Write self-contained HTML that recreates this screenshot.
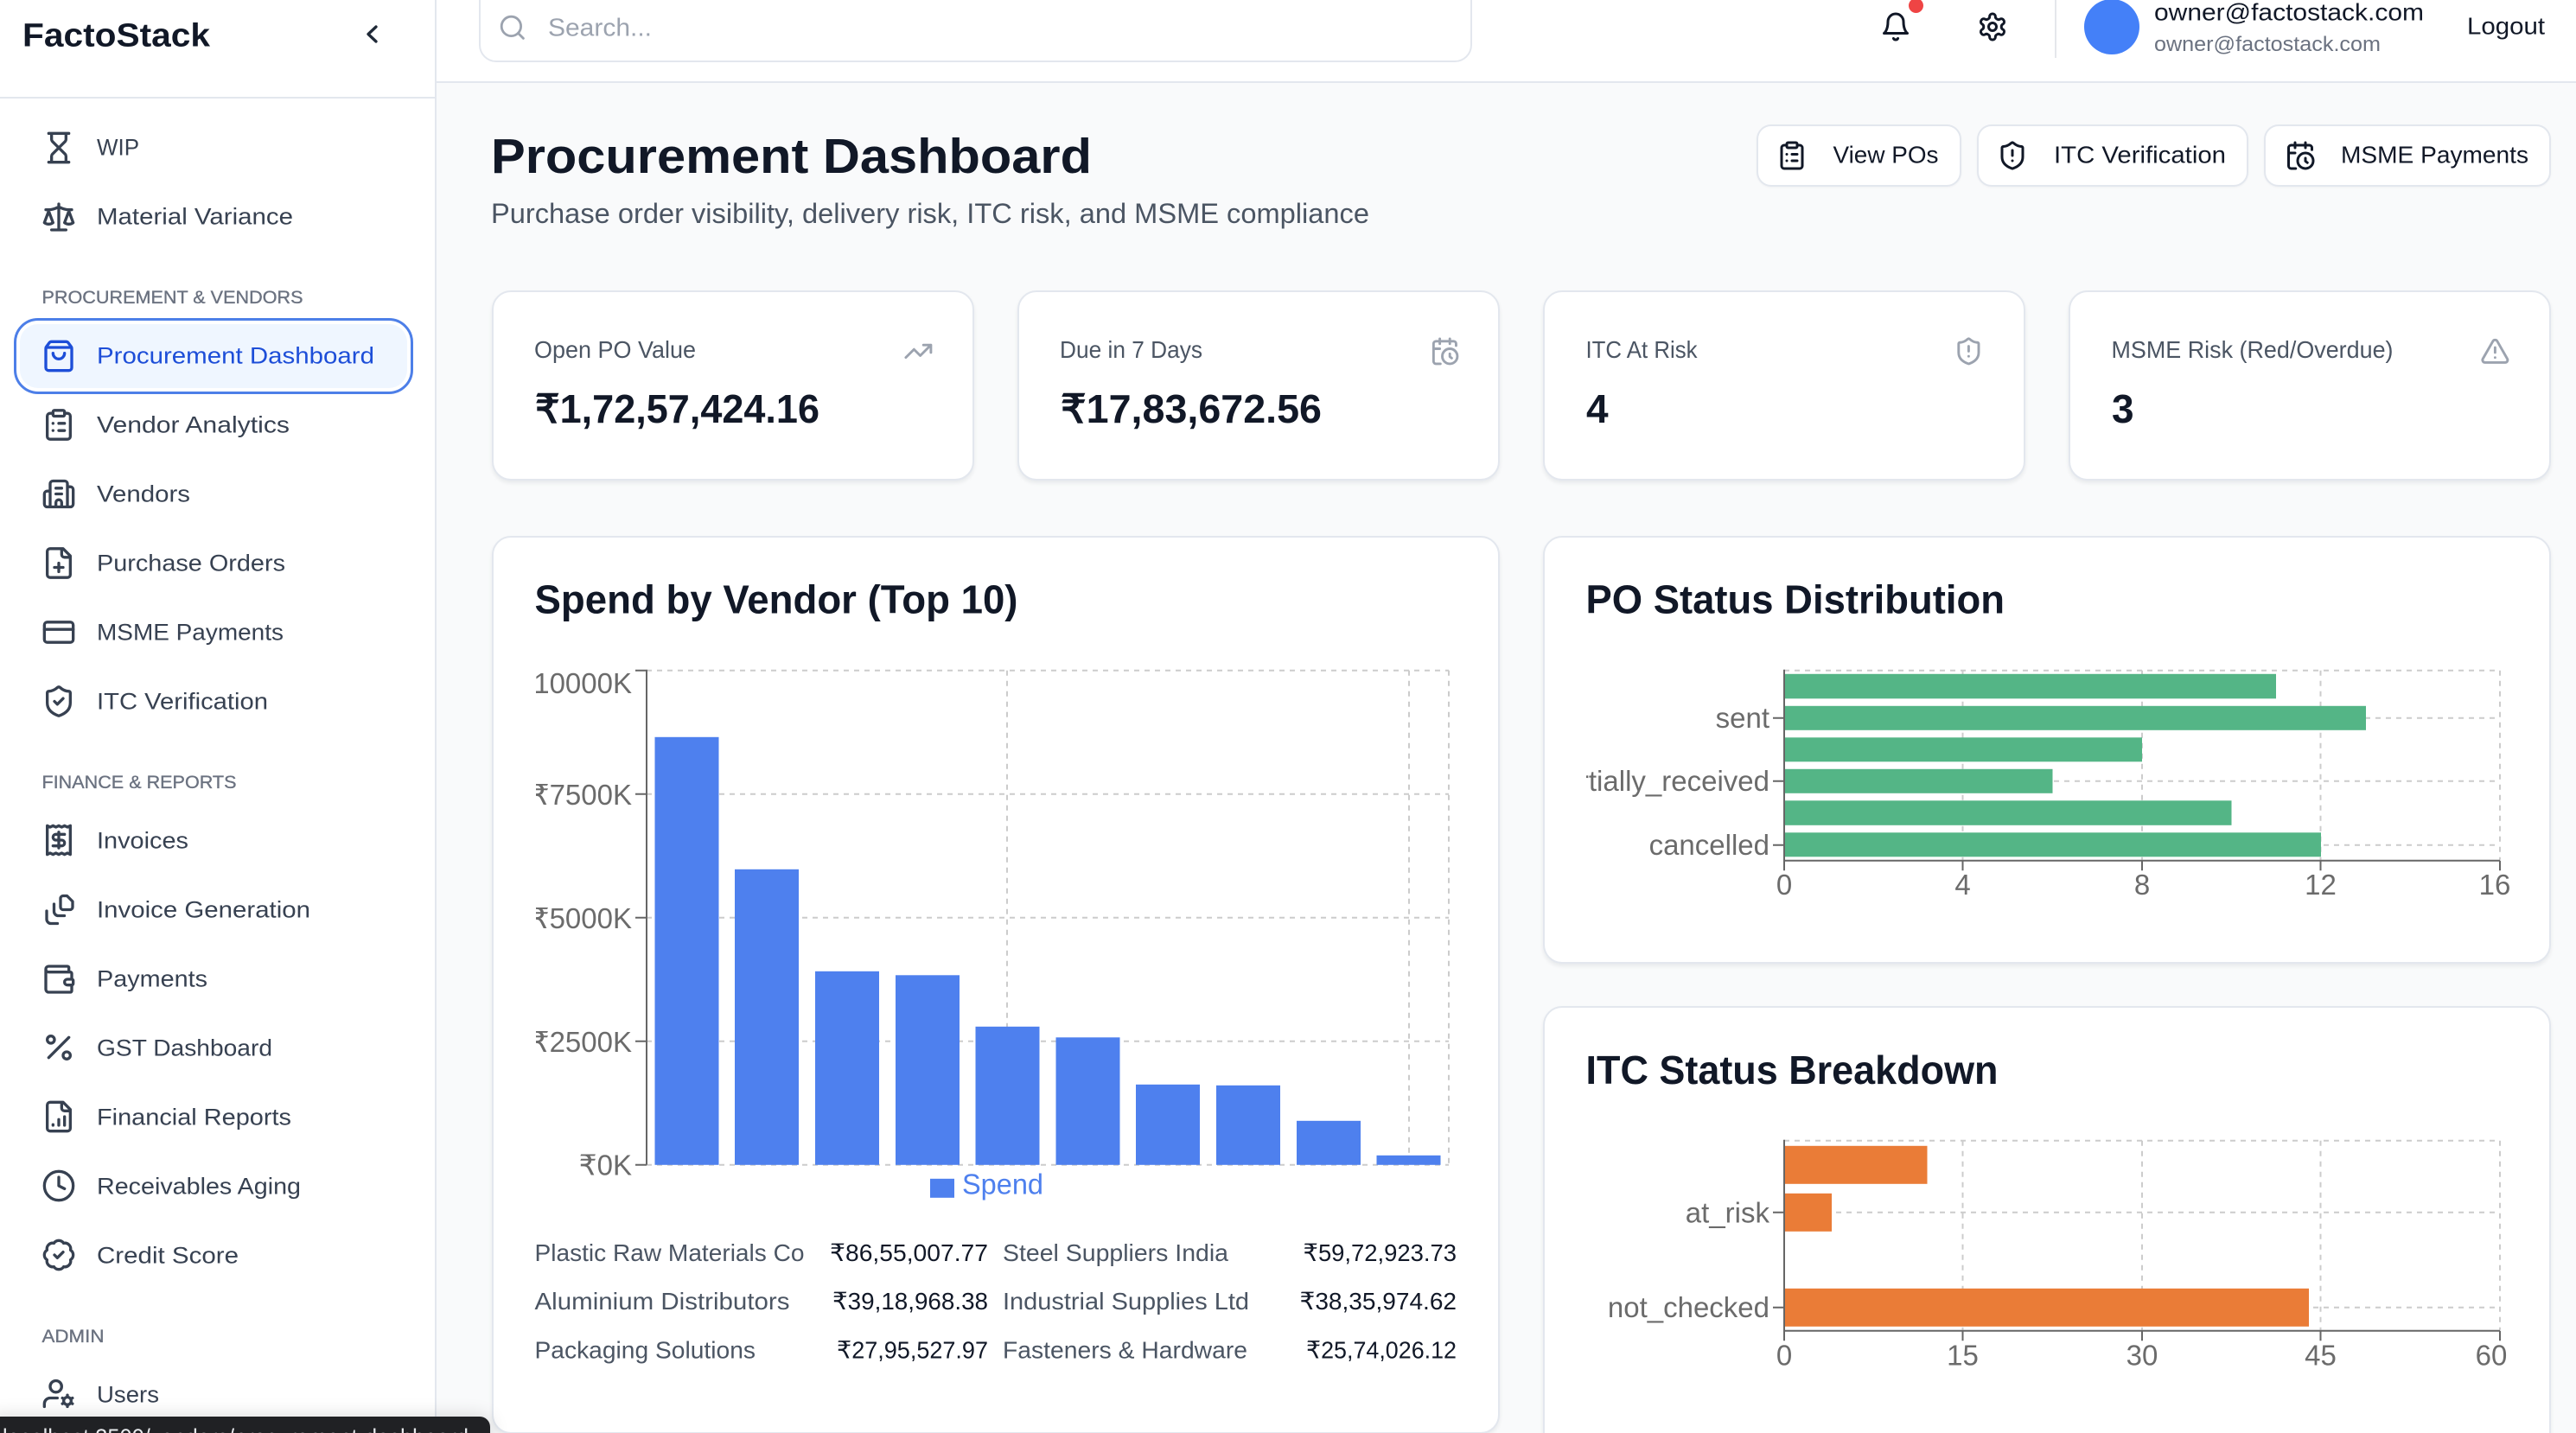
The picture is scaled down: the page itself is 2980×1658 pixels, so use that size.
<!DOCTYPE html>
<html lang="en"><head><meta charset="utf-8"><title>Procurement Dashboard</title>
<style>
html,body{margin:0;padding:0;width:2980px;height:1658px;overflow:hidden;background:#f9fafb;font-family:"Liberation Sans",sans-serif}
#page{position:relative;width:2980px;height:1658px;overflow:hidden;background:#f9fafb;contain:paint}
.a{position:absolute;box-sizing:border-box}
.card{background:#fff;border:2px solid #e3e7ee;border-radius:22px;box-shadow:0 3px 5px rgba(17,24,39,.07)}
.btn{background:#fff;border:2.5px solid #e3e7ee;border-radius:17px;top:144px;height:72px;box-shadow:0 1px 2px rgba(17,24,39,.04)}
svg{position:absolute;left:0;top:0}
text{font-family:"Liberation Sans",sans-serif;white-space:pre}
.n{font-size:27px;fill:#374151}
.s{font-size:21.5px;fill:#6b7280;stroke:#6b7280;stroke-width:.35}
.i{fill:none;stroke:#374151;stroke-width:2;stroke-linecap:round;stroke-linejoin:round}
.k{fill:none;stroke:#111827;stroke-width:2;stroke-linecap:round;stroke-linejoin:round}
.g{fill:none;stroke:#9ca3af;stroke-width:2;stroke-linecap:round;stroke-linejoin:round}
.lab{font-size:28px;fill:#4b5563}
.val{font-size:28px;fill:#111827}
.ttl{font-size:46px;font-weight:700;fill:#111827}
.kl{font-size:28px;fill:#4b5563}
.kv{font-size:46px;font-weight:700;fill:#111827}
.b{font-size:28px;fill:#111827}
.t{font-size:33px;fill:#6b6b6b}
.d{stroke:#ccc;stroke-width:2;stroke-dasharray:6 6;fill:none}
.ax{stroke:#666;stroke-width:2;fill:none}
</style></head><body>
<div id="page">

<div class="a" style="left:0;top:0;width:505px;height:1658px;background:#fff;border-right:2.5px solid #e3e7ee"></div>
<div class="a" style="left:0;top:112px;width:503px;height:2px;background:#e3e7ee"></div>
<div class="a" style="left:505px;top:0;width:2475px;height:96px;background:#fff;border-bottom:2.5px solid #e3e7ee"></div>
<div class="a" style="left:554px;top:-30px;width:1149px;height:102px;background:#fff;border:2.5px solid #e3e7ee;border-radius:20px"></div>
<div class="a" style="left:2377px;top:0;width:2px;height:67px;background:#e5e7eb"></div>
<div class="a" style="left:2208px;top:-2px;width:17px;height:17px;border-radius:50%;background:#ef4444"></div>
<div class="a" style="left:2411px;top:-1px;width:64px;height:64px;border-radius:50%;background:#4480f8"></div>

<div class="a" style="left:16px;top:368px;width:462px;height:88px;border-radius:28px;background:#eff6ff;border:3.5px solid #4d7fe8;box-shadow:inset 0 0 0 4px #fff"></div>

<div class="a btn" style="left:2032px;width:237px"></div>
<div class="a btn" style="left:2287px;width:314px"></div>
<div class="a btn" style="left:2619px;width:332px"></div>

<div class="a card" style="left:569px;top:336px;width:558px;height:220px"></div>
<div class="a card" style="left:1177px;top:336px;width:558px;height:220px"></div>
<div class="a card" style="left:1785px;top:336px;width:558px;height:220px"></div>
<div class="a card" style="left:2393px;top:336px;width:558px;height:220px"></div>

<div class="a card" style="left:569px;top:620px;width:1166px;height:1039px"></div>
<div class="a card" style="left:1785px;top:620px;width:1166px;height:495px"></div>
<div class="a card" style="left:1785px;top:1164px;width:1166px;height:520px"></div>

<svg width="2980" height="1658" viewBox="0 0 2980 1658" xmlns="http://www.w3.org/2000/svg">
<defs>
<clipPath id="c1"><rect x="620" y="760" width="140" height="620"/></clipPath>
<clipPath id="c2"><rect x="1835" y="760" width="240" height="800"/></clipPath>
</defs>

<!-- sidebar header -->
<text x="26" y="53.5" font-size="38" font-weight="700" fill="#111827" textLength="217" lengthAdjust="spacingAndGlyphs">FactoStack</text>
<path d="M435 31l-9 8.5 9 8.5" fill="none" stroke="#1f2937" stroke-width="3.3" stroke-linecap="round" stroke-linejoin="round"/>

<!-- nav labels -->
<text class="n" x="112" y="179.5" textLength="49" lengthAdjust="spacingAndGlyphs">WIP</text>
<text class="n" x="112" y="259.5" textLength="227" lengthAdjust="spacingAndGlyphs">Material Variance</text>
<text class="s" x="48.5" y="351" textLength="302" lengthAdjust="spacingAndGlyphs">PROCUREMENT &amp; VENDORS</text>
<text class="n" x="112" y="420.5" style="fill:#1d4ed8" textLength="321" lengthAdjust="spacingAndGlyphs">Procurement Dashboard</text>
<text class="n" x="112" y="500.5" textLength="223" lengthAdjust="spacingAndGlyphs">Vendor Analytics</text>
<text class="n" x="112" y="580.5" textLength="108" lengthAdjust="spacingAndGlyphs">Vendors</text>
<text class="n" x="112" y="660.5" textLength="218" lengthAdjust="spacingAndGlyphs">Purchase Orders</text>
<text class="n" x="112" y="740.5" textLength="216" lengthAdjust="spacingAndGlyphs">MSME Payments</text>
<text class="n" x="112" y="820.5" textLength="198" lengthAdjust="spacingAndGlyphs">ITC Verification</text>
<text class="s" x="48.5" y="912" textLength="225" lengthAdjust="spacingAndGlyphs">FINANCE &amp; REPORTS</text>
<text class="n" x="112" y="981.5" textLength="106" lengthAdjust="spacingAndGlyphs">Invoices</text>
<text class="n" x="112" y="1061.5" textLength="247" lengthAdjust="spacingAndGlyphs">Invoice Generation</text>
<text class="n" x="112" y="1141.5" textLength="128" lengthAdjust="spacingAndGlyphs">Payments</text>
<text class="n" x="112" y="1221.5" textLength="203" lengthAdjust="spacingAndGlyphs">GST Dashboard</text>
<text class="n" x="112" y="1301.5" textLength="225" lengthAdjust="spacingAndGlyphs">Financial Reports</text>
<text class="n" x="112" y="1381.5" textLength="236" lengthAdjust="spacingAndGlyphs">Receivables Aging</text>
<text class="n" x="112" y="1461.5" textLength="164" lengthAdjust="spacingAndGlyphs">Credit Score</text>
<text class="s" x="48.5" y="1553" textLength="72" lengthAdjust="spacingAndGlyphs">ADMIN</text>
<text class="n" x="112" y="1622.5" textLength="72" lengthAdjust="spacingAndGlyphs">Users</text>

<!-- nav icons -->
<g class="i" transform="translate(48,151) scale(1.6667)"><path d="M5 22h14M5 2h14M17 22v-4.172a2 2 0 0 0-.586-1.414L12 12l-4.414 4.414A2 2 0 0 0 7 17.828V22M7 2v4.172a2 2 0 0 0 .586 1.414L12 12l4.414-4.414A2 2 0 0 0 17 6.172V2"/></g>
<g class="i" transform="translate(48,231) scale(1.6667)"><path d="m16 16 3-8 3 8c-.87.65-1.92 1-3 1s-2.13-.35-3-1ZM2 16l3-8 3 8c-.87.65-1.92 1-3 1s-2.13-.35-3-1ZM7 21h10M12 3v18M3 7h2c2 0 5-1 7-2 2 1 5 2 7 2h2"/></g>
<g class="i" style="stroke:#1d4ed8" transform="translate(48,392) scale(1.6667)"><path d="M16 10a4 4 0 0 1-8 0M3.1 6h17.8M3.4 5.47a2 2 0 0 0-.4 1.2V20a2 2 0 0 0 2 2h14a2 2 0 0 0 2-2V6.67a2 2 0 0 0-.4-1.2l-2-2.67A2 2 0 0 0 17 2H7a2 2 0 0 0-1.6.8z"/></g>
<g class="i" transform="translate(48,471.5) scale(1.6667)"><rect x="8" y="2" width="8" height="4" rx="1"/><path d="M16 4h2a2 2 0 0 1 2 2v14a2 2 0 0 1-2 2H6a2 2 0 0 1-2-2V6a2 2 0 0 1 2-2h2M12 11h4M12 16h4M8 11h.01M8 16h.01"/></g>
<g class="i" transform="translate(48,551.5) scale(1.6667)"><path d="M10 12h4M10 8h4M14 21v-3a2 2 0 0 0-4 0v3M6 10H4a2 2 0 0 0-2 2v7a2 2 0 0 0 2 2h16a2 2 0 0 0 2-2V9a2 2 0 0 0-2-2h-2M6 21V5a2 2 0 0 1 2-2h8a2 2 0 0 1 2 2v16"/></g>
<g class="i" transform="translate(48,631.5) scale(1.6667)"><path d="M15 2H6a2 2 0 0 0-2 2v16a2 2 0 0 0 2 2h12a2 2 0 0 0 2-2V7ZM14 2v4a2 2 0 0 0 2 2h4M9 15h6M12 18v-6"/></g>
<g class="i" transform="translate(48,711.5) scale(1.6667)"><rect x="2" y="5" width="20" height="14" rx="2"/><path d="M2 10h20"/></g>
<g class="i" transform="translate(48,791.5) scale(1.6667)"><path d="M20 13c0 5-3.5 7.5-7.66 8.95a1 1 0 0 1-.67-.01C7.5 20.5 4 18 4 13V6a1 1 0 0 1 1-1c2 0 4.5-1.2 6.24-2.72a1.17 1.17 0 0 1 1.52 0C14.51 3.81 17 5 19 5a1 1 0 0 1 1 1zM9 12l2 2 4-4"/></g>
<g class="i" transform="translate(48,952) scale(1.6667)"><path d="M4 2v20l2-1 2 1 2-1 2 1 2-1 2 1 2-1 2 1V2l-2 1-2-1-2 1-2-1-2 1-2-1-2 1ZM16 8h-6a2 2 0 1 0 0 4h4a2 2 0 1 1 0 4H8M12 17.5v-11"/></g>
<path d="M73 1036.5h4.5l6.5 6.5v6.5a3 3 0 0 1-3 3h-8a3 3 0 0 1-3-3v-10a3 3 0 0 1 3-3zM62.5 1046v8.5a5 5 0 0 0 5 5h7M54 1054v9.5a5 5 0 0 0 5 5h7.5" fill="none" stroke="#374151" stroke-width="3.3" stroke-linecap="round" stroke-linejoin="round"/>
<g class="i" transform="translate(48,1113) scale(1.6667)"><path d="M19 7V4a1 1 0 0 0-1-1H5a2 2 0 0 0 0 4h15a1 1 0 0 1 1 1v4h-3a2 2 0 0 0 0 4h3a1 1 0 0 0 1-1v-2a1 1 0 0 0-1-1M3 5v14a2 2 0 0 0 2 2h15a1 1 0 0 0 1-1v-4"/></g>
<g class="i" transform="translate(48,1192) scale(1.6667)"><path d="M19 5 5 19"/><circle cx="6.5" cy="6.5" r="2.5"/><circle cx="17.5" cy="17.5" r="2.5"/></g>
<g class="i" transform="translate(48,1272) scale(1.6667)"><path d="M15 2H6a2 2 0 0 0-2 2v16a2 2 0 0 0 2 2h12a2 2 0 0 0 2-2V7ZM14 2v4a2 2 0 0 0 2 2h4M8 18v-.5M12 18v-4M16 18v-6"/></g>
<g class="i" transform="translate(48,1352) scale(1.6667)"><circle cx="12" cy="12" r="10"/><path d="M12 6v6l4 2"/></g>
<g class="i" transform="translate(48,1432) scale(1.6667)"><path d="M3.85 8.62a4 4 0 0 1 4.78-4.77 4 4 0 0 1 6.74 0 4 4 0 0 1 4.78 4.78 4 4 0 0 1 0 6.74 4 4 0 0 1-4.77 4.78 4 4 0 0 1-6.75 0 4 4 0 0 1-4.78-4.77 4 4 0 0 1 0-6.76ZM9 12l2 2 4-4"/></g>
<g class="i" transform="translate(48,1592.5) scale(1.6667)"><circle cx="10" cy="7" r="4"/><path d="M2 21v-2a4 4 0 0 1 4-4h5"/><circle cx="18" cy="17" r="2.6"/><path d="M18 13v.6M18 20.4v.6M14.5 15l.6.3M20.9 18.7l.6.3M14.5 19l.6-.3M20.9 15.3l.6-.3"/></g>

<!-- top bar -->
<g class="g" transform="translate(576,15) scale(1.4)"><circle cx="11" cy="11" r="8"/><path d="m21 21-4.3-4.3"/></g>
<text x="634" y="41.5" font-size="29" fill="#9ca3af" textLength="120" lengthAdjust="spacingAndGlyphs">Search...</text>
<g class="k" transform="translate(2175,13) scale(1.5)"><path d="M6 8a6 6 0 0 1 12 0c0 7 3 9 3 9H3s3-2 3-9M10.3 21a1.94 1.94 0 0 0 3.4 0"/></g>
<g class="k" transform="translate(2287,13) scale(1.5)"><path d="M12.22 2h-.44a2 2 0 0 0-2 2v.18a2 2 0 0 1-1 1.73l-.43.25a2 2 0 0 1-2 0l-.15-.08a2 2 0 0 0-2.73.73l-.22.38a2 2 0 0 0 .73 2.73l.15.1a2 2 0 0 1 1 1.72v.51a2 2 0 0 1-1 1.74l-.15.09a2 2 0 0 0-.73 2.73l.22.38a2 2 0 0 0 2.73.73l.15-.08a2 2 0 0 1 2 0l.43.25a2 2 0 0 1 1 1.73V20a2 2 0 0 0 2 2h.44a2 2 0 0 0 2-2v-.18a2 2 0 0 1 1-1.73l.43-.25a2 2 0 0 1 2 0l.15.08a2 2 0 0 0 2.73-.73l.22-.39a2 2 0 0 0-.73-2.73l-.15-.08a2 2 0 0 1-1-1.74v-.5a2 2 0 0 1 1-1.74l.15-.09a2 2 0 0 0 .73-2.73l-.22-.38a2 2 0 0 0-2.73-.73l-.15.08a2 2 0 0 1-2 0l-.43-.25a2 2 0 0 1-1-1.73V4a2 2 0 0 0-2-2z"/><circle cx="12" cy="12" r="3"/></g>
<text x="2492" y="23.5" font-size="28" fill="#111827" textLength="312" lengthAdjust="spacingAndGlyphs">owner@factostack.com</text>
<text x="2492" y="59" font-size="24" fill="#6b7280" textLength="262" lengthAdjust="spacingAndGlyphs">owner@factostack.com</text>
<text x="2854" y="39.5" font-size="28" fill="#111827" textLength="90" lengthAdjust="spacingAndGlyphs">Logout</text>

<!-- page header -->
<text x="568" y="200" font-size="57" font-weight="700" fill="#111827" textLength="695" lengthAdjust="spacingAndGlyphs">Procurement Dashboard</text>
<text x="568" y="258" font-size="32" fill="#4b5563" textLength="1016" lengthAdjust="spacingAndGlyphs">Purchase order visibility, delivery risk, ITC risk, and MSME compliance</text>

<!-- buttons -->
<g class="k" transform="translate(2055,162) scale(1.5)"><rect x="8" y="2" width="8" height="4" rx="1"/><path d="M16 4h2a2 2 0 0 1 2 2v14a2 2 0 0 1-2 2H6a2 2 0 0 1-2-2V6a2 2 0 0 1 2-2h2M12 11h4M12 16h4M8 11h.01M8 16h.01"/></g>
<text class="b" x="2120.5" y="188.5" textLength="122" lengthAdjust="spacingAndGlyphs">View POs</text>
<g class="k" transform="translate(2310,162) scale(1.5)"><path d="M20 13c0 5-3.5 7.5-7.66 8.95a1 1 0 0 1-.67-.01C7.5 20.5 4 18 4 13V6a1 1 0 0 1 1-1c2 0 4.5-1.2 6.24-2.72a1.17 1.17 0 0 1 1.52 0C14.51 3.81 17 5 19 5a1 1 0 0 1 1 1zM12 8v4M12 16h.01"/></g>
<text class="b" x="2376" y="188.5" textLength="199" lengthAdjust="spacingAndGlyphs">ITC Verification</text>
<g class="k" transform="translate(2643,162) scale(1.5)"><path d="M21 7.5V6a2 2 0 0 0-2-2H5a2 2 0 0 0-2 2v14a2 2 0 0 0 2 2h3.5M16 2v4M8 2v4M3 10h5M17.5 17.5 16 16.3V14"/><circle cx="16" cy="16" r="6"/></g>
<text class="b" x="2708" y="188.5" textLength="217" lengthAdjust="spacingAndGlyphs">MSME Payments</text>

<!-- KPIs -->
<text class="kl" x="618" y="414" textLength="187" lengthAdjust="spacingAndGlyphs">Open PO Value</text>
<g class="g" transform="translate(1045,389) scale(1.45)"><path d="M16 7h6v6M22 7l-8.5 8.5-5-5L2 17"/></g>
<text class="kv" x="619" y="489" textLength="329" lengthAdjust="spacingAndGlyphs">₹1,72,57,424.16</text>
<text class="kl" x="1226" y="414" textLength="165" lengthAdjust="spacingAndGlyphs">Due in 7 Days</text>
<g class="g" transform="translate(1654,389) scale(1.45)"><path d="M21 7.5V6a2 2 0 0 0-2-2H5a2 2 0 0 0-2 2v14a2 2 0 0 0 2 2h3.5M16 2v4M8 2v4M3 10h5M17.5 17.5 16 16.3V14"/><circle cx="16" cy="16" r="6"/></g>
<text class="kv" x="1227" y="489" textLength="302" lengthAdjust="spacingAndGlyphs">₹17,83,672.56</text>
<text class="kl" x="1834.5" y="414" textLength="129" lengthAdjust="spacingAndGlyphs">ITC At Risk</text>
<g class="g" transform="translate(2260,389) scale(1.45)"><path d="M20 13c0 5-3.5 7.5-7.66 8.95a1 1 0 0 1-.67-.01C7.5 20.5 4 18 4 13V6a1 1 0 0 1 1-1c2 0 4.5-1.2 6.24-2.72a1.17 1.17 0 0 1 1.52 0C14.51 3.81 17 5 19 5a1 1 0 0 1 1 1zM12 8v4M12 16h.01"/></g>
<text class="kv" x="1835" y="489">4</text>
<text class="kl" x="2442.5" y="414" textLength="326" lengthAdjust="spacingAndGlyphs">MSME Risk (Red/Overdue)</text>
<g class="g" transform="translate(2869,389) scale(1.45)"><path d="m21.73 18-8-14a2 2 0 0 0-3.48 0l-8 14A2 2 0 0 0 4 21h16a2 2 0 0 0 1.73-3M12 9v4M12 17h.01"/></g>
<text class="kv" x="2443" y="489">3</text>

<g transform="translate(0,.8)">
<!-- Spend chart -->
<text class="ttl" x="618.5" y="708.5" textLength="559" lengthAdjust="spacingAndGlyphs">Spend by Vendor (Top 10)</text>
<path class="d" d="M748 775H1676M748 918H1676M748 1061H1676M748 1204H1676M748 1347H1676M1165 775V1347M1630 775V1347M1676 775V1347"/>
<g fill="#4e80ee">
<rect x="757.5" y="852" width="74" height="495"/>
<rect x="850" y="1005" width="74" height="342"/>
<rect x="943" y="1123" width="74" height="224"/>
<rect x="1036" y="1127.5" width="74" height="219.5"/>
<rect x="1128.5" y="1187" width="74" height="160"/>
<rect x="1221.5" y="1199.5" width="74" height="147.5"/>
<rect x="1314" y="1254" width="74" height="93"/>
<rect x="1407" y="1255" width="74" height="92"/>
<rect x="1500" y="1296" width="74" height="51"/>
<rect x="1592.5" y="1336" width="74" height="11"/>
</g>
<path class="ax" d="M748 774V1347M735 775H748M735 918H748M735 1061H748M735 1204H748M735 1347H748"/>
<g clip-path="url(#c1)" text-anchor="end">
<text class="t" x="731" y="801">₹10000K</text>
<text class="t" x="731" y="930">₹7500K</text>
<text class="t" x="731" y="1073">₹5000K</text>
<text class="t" x="731" y="1216">₹2500K</text>
<text class="t" x="731" y="1358.5">₹0K</text>
</g>
<rect x="1076" y="1363" width="28" height="22" fill="#4e80ee"/>
<text x="1113" y="1380.5" font-size="33" fill="#4e80ee" textLength="94" lengthAdjust="spacingAndGlyphs">Spend</text>

<text class="lab" x="618.5" y="1458" textLength="312" lengthAdjust="spacingAndGlyphs">Plastic Raw Materials Co</text>
<text class="val" x="960" y="1458" textLength="183" lengthAdjust="spacingAndGlyphs">₹86,55,007.77</text>
<text class="lab" x="1160" y="1458" textLength="261" lengthAdjust="spacingAndGlyphs">Steel Suppliers India</text>
<text class="val" x="1507.5" y="1458" textLength="177.5" lengthAdjust="spacingAndGlyphs">₹59,72,923.73</text>
<text class="lab" x="618.5" y="1514" textLength="295" lengthAdjust="spacingAndGlyphs">Aluminium Distributors</text>
<text class="val" x="963" y="1514" textLength="180" lengthAdjust="spacingAndGlyphs">₹39,18,968.38</text>
<text class="lab" x="1160" y="1514" textLength="285" lengthAdjust="spacingAndGlyphs">Industrial Supplies Ltd</text>
<text class="val" x="1503.5" y="1514" textLength="181.5" lengthAdjust="spacingAndGlyphs">₹38,35,974.62</text>
<text class="lab" x="618.5" y="1570.5" textLength="255.5" lengthAdjust="spacingAndGlyphs">Packaging Solutions</text>
<text class="val" x="968" y="1570.5" textLength="175" lengthAdjust="spacingAndGlyphs">₹27,95,527.97</text>
<text class="lab" x="1160" y="1570.5" textLength="283" lengthAdjust="spacingAndGlyphs">Fasteners &amp; Hardware</text>
<text class="val" x="1511" y="1570.5" textLength="174" lengthAdjust="spacingAndGlyphs">₹25,74,026.12</text>

<!-- PO status chart -->
<text class="ttl" x="1834.5" y="708.5" textLength="484.5" lengthAdjust="spacingAndGlyphs">PO Status Distribution</text>
<path class="d" d="M2064 775H2892M2064 830H2892M2064 903H2892M2064 977H2892M2270.5 775V994M2478 775V994M2684.5 775V994M2892 775V994"/>
<g fill="#54b586">
<rect x="2064" y="779" width="569" height="28.5"/>
<rect x="2064" y="816" width="673" height="28"/>
<rect x="2064" y="852.5" width="414" height="28"/>
<rect x="2064" y="889" width="310.5" height="28"/>
<rect x="2064" y="925.5" width="517.5" height="28.5"/>
<rect x="2064" y="962.5" width="621" height="28"/>
</g>
<path class="ax" d="M2064 774V995M2051 830H2064M2051 903H2064M2051 977H2064M2064 995H2892M2064 995V1006.5M2270.5 995V1006.5M2478 995V1006.5M2684.5 995V1006.5M2892 995V1006.5"/>
<g clip-path="url(#c2)" text-anchor="end">
<text class="t" x="2047" y="841">sent</text>
<text class="t" x="2047" y="914">partially_received</text>
<text class="t" x="2047" y="988">cancelled</text>
</g>
<g text-anchor="middle">
<text class="t" x="2064" y="1034">0</text><text class="t" x="2270.5" y="1034">4</text><text class="t" x="2478" y="1034">8</text><text class="t" x="2684.5" y="1034">12</text><text class="t" x="2886" y="1034">16</text>
</g>

<!-- ITC chart -->
<text class="ttl" x="1834.5" y="1253" textLength="477" lengthAdjust="spacingAndGlyphs">ITC Status Breakdown</text>
<path class="d" d="M2064 1319H2892M2064 1402H2892M2064 1512H2892M2270.5 1319V1538M2478 1319V1538M2684.5 1319V1538M2892 1319V1538"/>
<g fill="#ea7c37">
<rect x="2064" y="1325" width="165.5" height="44"/>
<rect x="2064" y="1380" width="55" height="44"/>
<rect x="2064" y="1490" width="607" height="44"/>
</g>
<path class="ax" d="M2064 1318V1539M2051 1402H2064M2051 1512H2064M2064 1539H2892M2064 1539V1550.5M2270.5 1539V1550.5M2478 1539V1550.5M2684.5 1539V1550.5M2892 1539V1550.5"/>
<g clip-path="url(#c2)" text-anchor="end">
<text class="t" x="2047" y="1413.5">at_risk</text>
<text class="t" x="2047" y="1523">not_checked</text>
</g>
<g text-anchor="middle">
<text class="t" x="2064" y="1578.5">0</text><text class="t" x="2270.5" y="1578.5">15</text><text class="t" x="2478" y="1578.5">30</text><text class="t" x="2684.5" y="1578.5">45</text><text class="t" x="2882" y="1578.5">60</text>
</g>
</g>
</svg>

<!-- status bubble -->
<div class="a" style="left:-10px;top:1639px;width:577px;height:40px;background:#202124;border-radius:0 12px 0 0;box-shadow:0 0 22px rgba(0,0,0,.16);overflow:hidden">
<svg width="577" height="40" viewBox="-10 1639 577 40" style="position:absolute;left:0;top:0"><text x="3" y="1672" font-size="27" fill="#e8eaed" textLength="539" lengthAdjust="spacingAndGlyphs">localhost:3500/vendors/procurement-dashboard</text></svg>
</div>
</div>
</body></html>
